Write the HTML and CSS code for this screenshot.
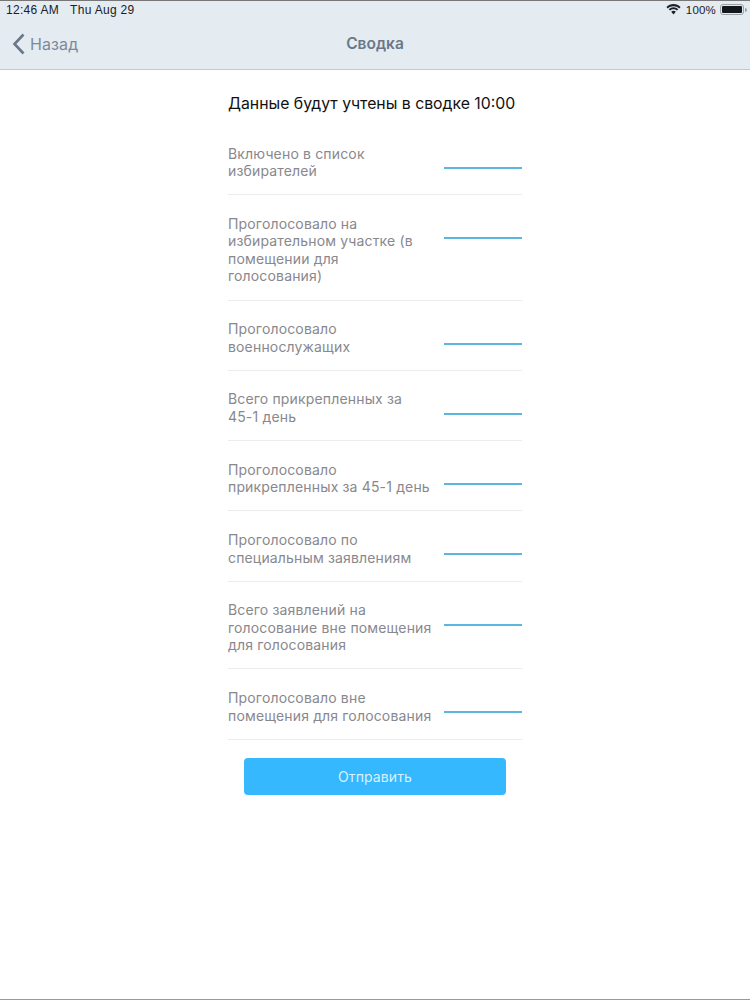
FILE: index.html
```html
<!DOCTYPE html>
<html lang="en">
<head>
  <meta charset="UTF-8" />
  <title>Сводка</title>
  <link rel="stylesheet" href="styles.css">
</head>
<body>

  <div class="page">
    <header class="top-bar">
      <div class="status-bar">
        <span class="status-time">12:46 AM</span>
        <span class="status-date">Thu Aug 29</span>
        <span class="status-right">
          <svg class="wifi-icon" xmlns="http://www.w3.org/2000/svg" width="15" height="11" viewBox="0 0 15 11" fill="#1b2025">
            <path d="M7.5 2.2c2.2 0 4.2.8 5.7 2.2L14.6 3C12.7 1.200 10.200 0 7.500 0S2.300 1.200.4 3l1.400 1.400C3.300 3 5.300 2.200 7.500 2.200z"/>
            <path d="M7.500 5.300c1.300 0 2.500.5 3.400 1.300l1.400-1.400C11 4 9.300 3.200 7.500 3.200S4 4 2.700 5.200l1.400 1.400c.9-.8 2.100-1.300 3.400-1.300z"/>
            <path d="M7.500 6.800c-.9 0-1.700.3-2.300.9l2.300 2.800 2.300-2.800c-.6-.6-1.400-.9-2.300-.9z"/>
          </svg>
          <span>100%</span>
          <span class="battery"><span class="battery-fill"></span></span>
          <span class="battery-tip"></span>
        </span>
      </div>
      <nav class="nav-bar">
        <a class="back-link" href="#">
          <svg xmlns="http://www.w3.org/2000/svg" width="13" height="22" viewBox="0 0 13 22" fill="none" stroke="#68788a" stroke-width="2.600">
            <path d="M11.500 1.500 2.500 11l9 9.500"/>
          </svg>
          Назад
        </a>
        <h1>Сводка</h1>
      </nav>
    </header>

    <form class="summary-form">
      <h2>Данные будут учтены в сводке 10:00</h2>

      <div class="field-row">
        <label>Включено в список избирателей</label>
        <input type="text" />
      </div>
      <div class="field-row">
        <label>Проголосовало на избирательном участке (в<br>помещении для<br>голосования)</label>
        <input type="text" />
      </div>
      <div class="field-row">
        <label>Проголосовало военнослужащих</label>
        <input type="text" />
      </div>
      <div class="field-row">
        <label>Всего прикрепленных за<br>45-1 день</label>
        <input type="text" />
      </div>
      <div class="field-row">
        <label>Проголосовало прикрепленных за 45-1 день</label>
        <input type="text" />
      </div>
      <div class="field-row">
        <label>Проголосовало по специальным заявлениям</label>
        <input type="text" />
      </div>
      <div class="field-row">
        <label>Всего заявлений на голосование вне помещения для голосования</label>
        <input type="text" />
      </div>
      <div class="field-row">
        <label>Проголосовало вне помещения для голосования</label>
        <input type="text" />
      </div>

      <button type="submit">Отправить</button>
    </form>
  </div>

</body>
</html>
```

FILE: styles.css
```css
* {
  box-sizing: border-box;
}

body {
  margin: 0;
  padding: 0;
  background: #fff;
  font-family: 'Inter', 'Liberation Sans', sans-serif;
  color: #111;
}

.page {
  display: flex;
  flex-direction: column;
  height: 1000px;
  border-bottom: 1px solid #999;
}

.top-bar {
  height: 70px;
  background: #e4ebf1;
  border-top: 1px solid #777;
  border-bottom: 1px solid #c6cacd;
}

.status-bar {
  display: flex;
  align-items: center;
  height: 17px;
  padding: 0 3px 0 6px;
  font-family: 'Liberation Sans', sans-serif;
  font-size: 11.500px;
  letter-spacing: 0.2px;
  color: #1b2025;
}

.status-time,
.status-date {
  font-size: 12px;
  letter-spacing: 0.3px;
}

.status-date {
  margin-left: 11px;
}

.status-right {
  display: flex;
  align-items: center;
  margin-left: auto;
}

.wifi-icon {
  margin-right: 5px;
}

.battery {
  width: 24px;
  height: 11px;
  margin-left: 4px;
  padding: 1px;
  border: 1px solid #9aa1a8;
  border-radius: 3px;
}

.battery-fill {
  display: block;
  height: 100%;
  background: #14171b;
  border-radius: 1px;
}

.battery-tip {
  width: 2px;
  height: 4px;
  margin-left: 1px;
  background: #9aa1a8;
  border-radius: 0 2px 2px 0;
}

.nav-bar {
  display: grid;
  grid-template-columns: 1fr auto 1fr;
  align-items: center;
  height: 51px;
  padding: 0 12px;
}

.back-link {
  display: flex;
  align-items: center;
  gap: 5px;
  font-size: 16px;
  letter-spacing: 0.1px;
  color: #7d8a98;
  text-decoration: none;
}

.nav-bar h1 {
  grid-column: 2;
  margin: 0;
  font-size: 15.500px;
  font-weight: 600;
  color: #68788a;
}

.summary-form {
  width: 294px;
  margin-left: 228px;
}

.summary-form h2 {
  height: 55px;
  margin: 0;
  padding-top: 24px;
  font-size: 15.800px;
  font-weight: 400;
  line-height: 20px;
  color: #111;
}

.field-row {
  display: flex;
  justify-content: space-between;
  align-items: flex-start;
  padding: 19.600px 0 14.700px;
  border-bottom: 1px solid #ececec;
}

.field-row label {
  width: 208px;
  font-size: 14px;
  line-height: 17.500px;
  letter-spacing: 0.16px;
  color: #88888e;
}

.field-row input {
  width: 78px;
  height: 2px;
  margin-top: 22.400px;
  padding: 0;
  border: none;
  background: #5bb8dd;
  outline: none;
}

.summary-form button {
  display: block;
  width: 262px;
  height: 37px;
  margin: 18px 0 0 16px;
  border: none;
  border-radius: 4px;
  background: #35b8fd;
  font-family: inherit;
  font-size: 14px;
  letter-spacing: 0.1px;
  color: #d8f0ff;
  cursor: pointer;
}
```
